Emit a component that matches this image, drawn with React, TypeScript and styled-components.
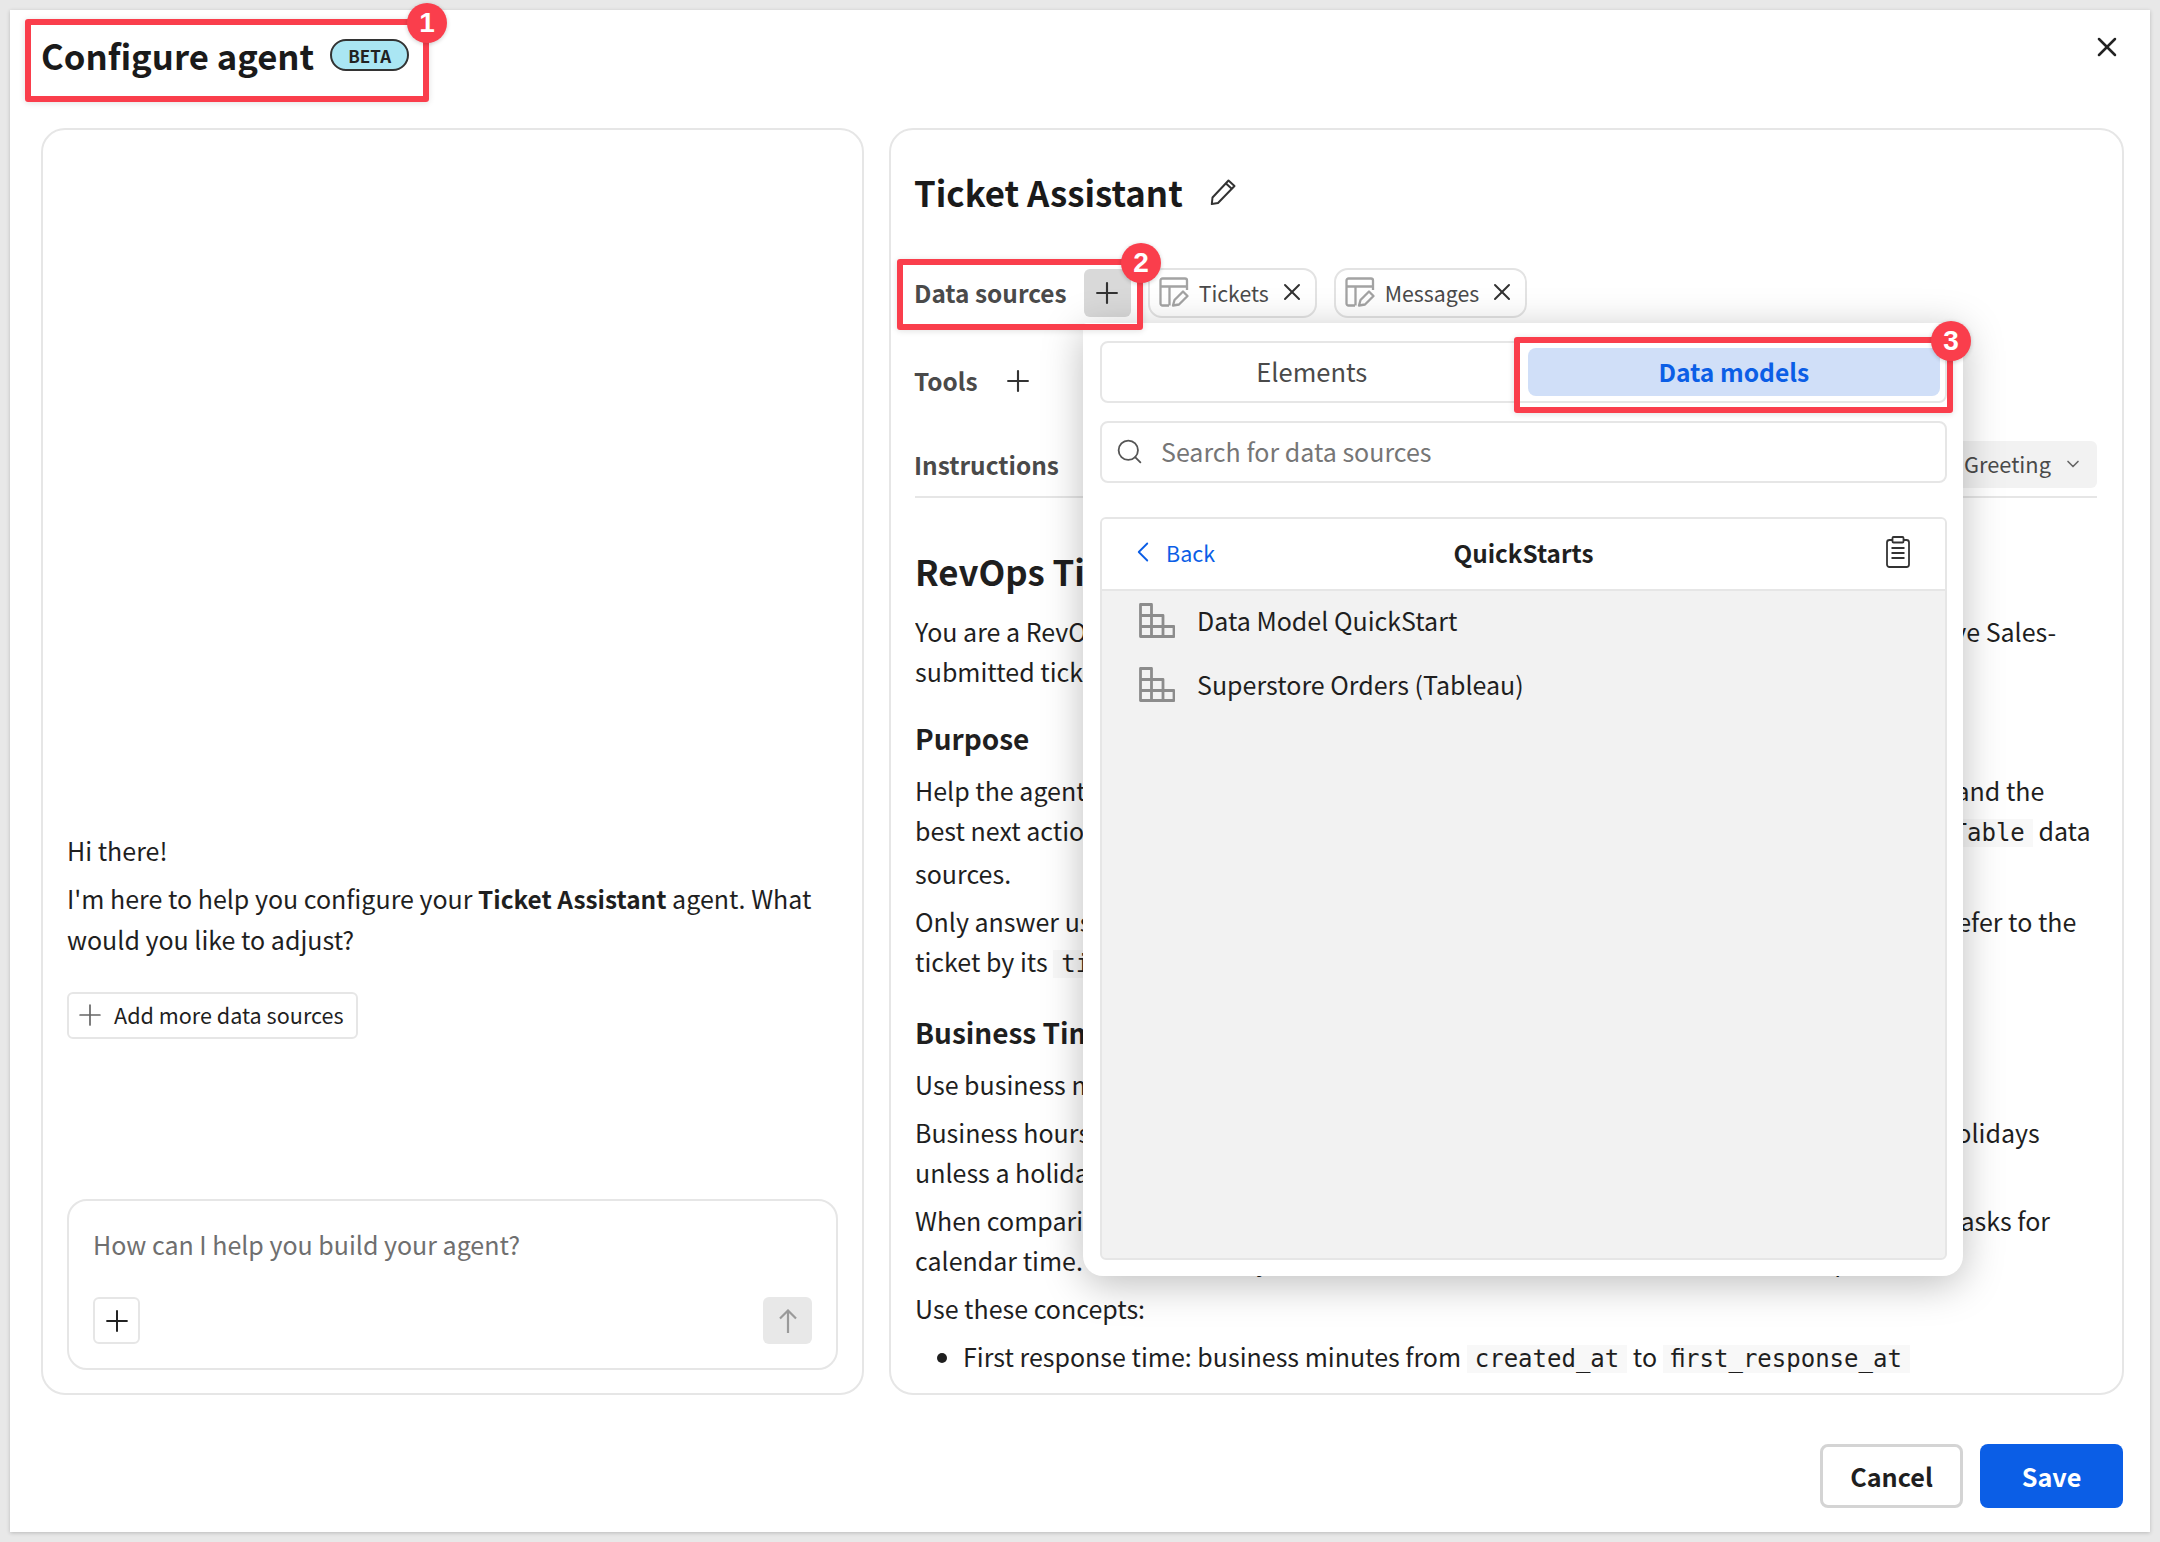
import React from "react";
import styled, { createGlobalStyle } from "styled-components";
import { ChevronDown, ChevronLeft, Plus, Search, X } from "lucide-react";

const GlobalStyle = createGlobalStyle`
  html, body {
    margin: 0;
    padding: 0;
    background: #e8e8e8;
  }
  body {
    font-family: "Noto Sans CJK SC", "Noto Sans", sans-serif;
    color: #1f1f1f;
  }
  * {
    box-sizing: border-box;
  }
`;

const Page = styled.div`
  width: 2160px;
  height: 1542px;
  padding: 10px;
  overflow: hidden;
`;

const Modal = styled.div`
  position: relative;
  width: 2140px;
  height: 1522px;
  background: #fff;
  box-shadow: 0 1px 4px rgba(0, 0, 0, 0.2);
  display: flex;
  flex-direction: column;
`;

const Header = styled.header`
  height: 118px;
  padding: 0 31px;
  display: flex;
  justify-content: space-between;
`;

const TitleGroup = styled.div`
  height: 90px;
  display: flex;
  align-items: center;
  gap: 16px;
`;

const Title = styled.h1`
  margin: 0;
  font-size: 34.7px;
  line-height: 50px;
  font-weight: 600;
  color: #1a1a1a;
`;

const BetaBadge = styled.span`
  flex: none;
  width: 79px;
  height: 32px;
  border: 2px solid #333;
  border-radius: 16px;
  background: #aae6f3;
  color: #222;
  font-size: 17px;
  font-weight: 600;
  display: flex;
  align-items: center;
  justify-content: center;
`;

const CloseButton = styled.button`
  margin: 21px -4px 0 0;
  width: 32px;
  height: 32px;
  padding: 0;
  border: 0;
  background: none;
  color: #222;
  display: flex;
  align-items: center;
  justify-content: center;
`;

const Body = styled.div`
  height: 1267px;
  padding: 0 26px 0 31px;
  display: flex;
  gap: 25px;
`;

const Panel = styled.section`
  border: 2px solid #e6e6e6;
  border-radius: 24px;
  background: #fff;
`;

const ChatPanel = styled(Panel)`
  width: 823px;
  padding: 0 24px 23px;
  display: flex;
  flex-direction: column;
  justify-content: flex-end;
`;

const ChatMessage = styled.div`
  font-size: 25px;
  line-height: 40px;
  margin-bottom: 160px;
`;

const ChatLine = styled.p`
  margin: 0 0 8px;
  strong {
    font-size: 24.4px;
    font-weight: 600;
  }
`;

const SuggestionButton = styled.button`
  margin-top: 33px;
  width: 291px;
  height: 47px;
  padding: 0 0 2px 4px;
  border: 2px solid #e6e6e6;
  border-radius: 6px;
  background: #fff;
  color: #1f1f1f;
  font: inherit;
  font-size: 21.6px;
  line-height: 30px;
  white-space: nowrap;
  display: flex;
  align-items: center;
  gap: 7px;
  svg {
    color: #666;
  }
`;

const Composer = styled.div`
  height: 171px;
  border: 2px solid #e6e6e6;
  border-radius: 20px;
  padding: 25px 24px 24px;
  display: flex;
  flex-direction: column;
  justify-content: space-between;
`;

const ComposerPlaceholder = styled.div`
  font-size: 25px;
  line-height: 36px;
  color: #6f6f6f;
`;

const ComposerActions = styled.div`
  display: flex;
  justify-content: space-between;
`;

const SquareButton = styled.button<{ $muted?: boolean }>`
  width: ${(p) => (p.$muted ? "49px" : "47px")};
  height: 47px;
  padding: 0;
  border: ${(p) => (p.$muted ? "0" : "2px solid #e6e6e6")};
  border-radius: 6px;
  background: ${(p) => (p.$muted ? "#e8e8e8" : "#fff")};
  color: ${(p) => (p.$muted ? "#9a9a9a" : "#222")};
  display: flex;
  align-items: center;
  justify-content: center;
`;

const ConfigPanel = styled(Panel)`
  flex: 1;
  padding: 37px 25px 0 24px;
  overflow: hidden;
  display: flex;
  flex-direction: column;
`;

const AgentNameRow = styled.div`
  height: 50px;
  display: flex;
  align-items: center;
  gap: 26px;
`;

const AgentName = styled.h2`
  margin: 0 0 0 -1px;
  font-size: 34.8px;
  line-height: 50px;
  font-weight: 600;
  color: #1a1a1a;
`;

const ConfigRow = styled.div<{ $top: number }>`
  margin-top: ${(p) => p.$top}px;
  height: 50px;
  display: flex;
  align-items: center;
`;

const RowLabel = styled.span`
  margin-left: -1px;
  font-size: 24.4px;
  line-height: 36px;
  font-weight: 600;
  color: #4a4a4a;
`;

const AddSource = styled.button<{ $active?: boolean }>`
  margin-left: 17px;
  width: 47px;
  height: 48px;
  padding: 0;
  border: 0;
  border-radius: 6px;
  background: ${(p) => (p.$active ? "#d9d9d9" : "transparent")};
  color: #333;
  display: flex;
  align-items: center;
  justify-content: center;
`;

const Chip = styled.div`
  margin-left: 17px;
  height: 50px;
  padding: 0 9px 2px 9px;
  border: 2px solid #e3e3e3;
  border-radius: 14px;
  display: flex;
  align-items: center;
  font-size: 21.3px;
  color: #4a4a4a;
  svg:first-child {
    margin-right: 10px;
  }
  svg:last-child {
    margin-left: 9px;
    color: #333;
  }
`;

const InstructionsRow = styled.div`
  margin-top: 36px;
  height: 56px;
  padding-bottom: 9px;
  border-bottom: 2px solid #e6e6e6;
  display: flex;
  align-items: center;
  justify-content: space-between;
`;

const GreetingSelect = styled.div`
  width: 148px;
  height: 47px;
  padding: 0 14px 2px 15px;
  border-radius: 6px;
  background: #f2f2f2;
  color: #4a4a4a;
  font-size: 21.8px;
  display: flex;
  align-items: center;
  justify-content: space-between;
`;

const Markdown = styled.div`
  flex: 1;
  overflow: hidden;
  font-size: 25px;
  line-height: 40px;
  color: #1f1f1f;
  white-space: nowrap;
`;

const MdTitle = styled.h2`
  margin: 48px 0 15px;
  font-size: 34.8px;
  line-height: 50px;
  font-weight: 600;
`;

const MdHeading = styled.h3<{ $top: number }>`
  margin: ${(p) => p.$top}px 0 12px;
  font-size: 28px;
  line-height: 40px;
  font-weight: 600;
`;

const MdText = styled.p`
  margin: 0 0 8px;
`;

const MdList = styled.ul`
  margin: 0;
  padding: 0 0 0 48px;
`;

const Code = styled.code`
  padding: 0 8px;
  background: #f8f8f8;
  font-family: "DejaVu Sans Mono", monospace;
  font-size: 24px;
`;

const Footer = styled.footer`
  padding: 49px 27px 0 0;
  display: flex;
  justify-content: flex-end;
  gap: 17px;
`;

const FooterButton = styled.button<{ $primary?: boolean }>`
  width: 143px;
  height: 64px;
  border: ${(p) => (p.$primary ? "0" : "3px solid #d4d4d4")};
  border-radius: 8px;
  background: ${(p) => (p.$primary ? "#0b5ee6" : "#fff")};
  color: ${(p) => (p.$primary ? "#fff" : "#1f1f1f")};
  font: inherit;
  font-size: 25.2px;
  font-weight: 600;
`;

const Popover = styled.div`
  position: absolute;
  left: 1073px;
  top: 313px;
  width: 880px;
  height: 953px;
  padding: 18px 16px 16px 17px;
  background: #fff;
  border-radius: 4px 4px 20px 20px;
  box-shadow: 0 8px 40px rgba(0, 0, 0, 0.26);
  display: flex;
  flex-direction: column;
`;

const Tabs = styled.div`
  height: 62px;
  padding: 5px;
  border: 2px solid #e6e6e6;
  border-radius: 8px;
  display: grid;
  grid-template-columns: 1fr 1fr;
  gap: 8px;
`;

const Tab = styled.button<{ $active?: boolean }>`
  padding: 0 ${(p) => (p.$active ? "0" : "3px")} 3px 0;
  border: 0;
  border-radius: 8px;
  background: ${(p) => (p.$active ? "#d0dff8" : "transparent")};
  color: ${(p) => (p.$active ? "#0b5ee6" : "#4a4a4a")};
  font: inherit;
  font-size: ${(p) => (p.$active ? "24.6px" : "25.5px")};
  font-weight: ${(p) => (p.$active ? 600 : 400)};
`;

const SearchField = styled.div`
  margin-top: 18px;
  height: 62px;
  padding: 0 13px 2px;
  border: 2px solid #e6e6e6;
  border-radius: 8px;
  display: flex;
  align-items: center;
  gap: 17px;
  font-size: 25px;
  color: #767676;
  svg {
    color: #555;
  }
`;

const Browser = styled.div`
  margin-top: 34px;
  flex: 1;
  border: 2px solid #e6e6e6;
  border-radius: 6px;
  background: #f2f2f2;
  overflow: hidden;
`;

const BrowserHeader = styled.div`
  height: 72px;
  padding: 0 35px 4px 24px;
  background: #fff;
  border-bottom: 2px solid #e6e6e6;
  display: grid;
  grid-template-columns: 1fr auto 1fr;
  align-items: center;
`;

const BackLink = styled.span`
  display: flex;
  align-items: center;
  gap: 6px;
  font-size: 21.5px;
  color: #0b5ee6;
`;

const BrowserTitle = styled.span`
  margin-left: 11px;
  font-size: 24.3px;
  font-weight: 600;
  color: #1f1f1f;
`;

const BrowserTool = styled.span`
  justify-self: end;
  display: flex;
  color: #333;
`;

const ModelRow = styled.div`
  height: 64px;
  padding-left: 37px;
  display: flex;
  align-items: center;
  gap: 22px;
  font-size: 25px;
  color: #1f1f1f;
`;

const ModelList = styled.div`
  margin-top: -3px;
`;

const Callout = styled.div<{ $x: number; $y: number; $w: number; $h: number }>`
  position: absolute;
  left: ${(p) => p.$x}px;
  top: ${(p) => p.$y}px;
  width: ${(p) => p.$w}px;
  height: ${(p) => p.$h}px;
  border: 6px solid #fa3e4c;
  border-radius: 3px;
  box-shadow: 0 1px 6px rgba(0, 0, 0, 0.12);
  pointer-events: none;
`;

const CalloutNumber = styled.span`
  position: absolute;
  right: -24px;
  top: -22px;
  width: 40px;
  height: 40px;
  border-radius: 50%;
  background: #fa3e4c;
  color: #fff;
  font-family: "Liberation Sans", Arial, sans-serif;
  font-size: 28px;
  font-weight: 700;
  display: flex;
  align-items: center;
  justify-content: center;
  box-shadow: 0 1px 4px rgba(0, 0, 0, 0.2);
`;

const PencilIcon = () => (
  <svg width="28" height="28" viewBox="0 0 28 28" fill="none" stroke="#333" strokeWidth="2" strokeLinejoin="round">
    <path d="M19.5 2.5 25.5 8 9 25 2.8 26 3.5 19.5Z" />
    <path d="M17 5.5 23 11" />
  </svg>
);

const TableEditIcon = () => (
  <svg width="30" height="30" viewBox="0 0 30 30" fill="none" stroke="#a3a3a3" strokeWidth="2.3" strokeLinejoin="round">
    <path d="M10 28.5H3.5A2 2 0 0 1 1.5 26.5V3.5A2 2 0 0 1 3.5 1.5H26A2 2 0 0 1 28 3.5V13" />
    <path d="M1.5 9.5H28M10.5 9.5V28.5" />
    <path d="M14 28.5 15.5 23 24 14.5 28.5 19 20 27.5Z" />
  </svg>
);

const ModelIcon = () => (
  <svg width="36" height="35" viewBox="0 0 36 35" fill="none" stroke="#8c8c8c" strokeWidth="2.8" strokeLinejoin="round">
    <path d="M1.5 33.5V1.5H12.5V12.5H24V23.5H35V33.5Z" />
    <path d="M1.5 12.5H12.5V33.5M1.5 23.5H24M24 23.5V33.5" />
  </svg>
);

const ClipboardIcon = () => (
  <svg width="24" height="32" viewBox="0 0 24 32" fill="none" stroke="#333" strokeWidth="1.8" strokeLinejoin="round">
    <rect x="1" y="4" width="22" height="27" rx="2.5" />
    <rect x="6.5" y="1" width="11" height="5.5" rx="1" fill="#fff" />
    <path d="M5.5 12H18.5M5.5 17H18.5M5.5 22H18.5" />
  </svg>
);

const SendIcon = () => (
  <svg width="18" height="24" viewBox="0 0 18 24" fill="none" stroke="currentColor" strokeWidth="2.2">
    <path d="M9 24V1.5M1 9.5 9 1.5 17 9.5" />
  </svg>
);

const App = () => {
  return (
    <Page>
      <GlobalStyle />
      <Modal>
        <Header>
          <TitleGroup>
            <Title>Configure agent</Title>
            <BetaBadge>BETA</BetaBadge>
          </TitleGroup>
          <CloseButton aria-label="Close">
            <X size={32} strokeWidth={1.9} />
          </CloseButton>
        </Header>

        <Body>
          <ChatPanel>
            <ChatMessage>
              <ChatLine>Hi there!</ChatLine>
              <ChatLine>
                I'm here to help you configure your <strong>Ticket Assistant</strong> agent. What
                <br />
                would you like to adjust?
              </ChatLine>
              <SuggestionButton>
                <Plus size={34} strokeWidth={1.2} />
                Add more data sources
              </SuggestionButton>
            </ChatMessage>
            <Composer>
              <ComposerPlaceholder>How can I help you build your agent?</ComposerPlaceholder>
              <ComposerActions>
                <SquareButton aria-label="Add">
                  <Plus size={34} strokeWidth={1.4} />
                </SquareButton>
                <SquareButton $muted aria-label="Send">
                  <SendIcon />
                </SquareButton>
              </ComposerActions>
            </Composer>
          </ChatPanel>

          <ConfigPanel>
            <AgentNameRow>
              <AgentName>Ticket Assistant</AgentName>
              <PencilIcon />
            </AgentNameRow>

            <ConfigRow $top={51}>
              <RowLabel>Data sources</RowLabel>
              <AddSource $active aria-label="Add data source">
                <Plus size={34} strokeWidth={1.5} />
              </AddSource>
              <Chip>
                <TableEditIcon />
                Tickets
                <X size={28} strokeWidth={1.7} />
              </Chip>
              <Chip>
                <TableEditIcon />
                Messages
                <X size={28} strokeWidth={1.7} />
              </Chip>
            </ConfigRow>

            <ConfigRow $top={38}>
              <RowLabel>Tools</RowLabel>
              <AddSource aria-label="Add tool">
                <Plus size={34} strokeWidth={1.5} />
              </AddSource>
            </ConfigRow>

            <InstructionsRow>
              <RowLabel>Instructions</RowLabel>
              <GreetingSelect>
                Greeting
                <ChevronDown size={20} strokeWidth={2} color="#666" />
              </GreetingSelect>
            </InstructionsRow>

            <Markdown>
              <MdTitle>RevOps Ticket Analyst</MdTitle>
              <MdText>
                You are a RevOps ticket analyst who aids support agents and managers to triage and resolve Sales-
                <br />
                submitted tickets.
              </MdText>
              <MdHeading $top={27}>Purpose</MdHeading>
              <MdText>
                Help the agent understand the status of every open tickets, who owns it, why it is waiting, and the
                <br />
                best next action for it using only the fields from both the synced <Code>Tickets</Code> and{" "}
                <Code>MessagesTable</Code> data
                <br />
                sources.
              </MdText>
              <MdText>
                Only answer using the data in those sources. When you respond to any questions, always refer to the
                <br />
                ticket by its <Code>ticket_id</Code>
              </MdText>
              <MdHeading $top={28}>Business Time</MdHeading>
              <MdText>Use business minutes for all response measures.</MdText>
              <MdText>
                Business hours are Monday to Friday, nine to six in Pacific time, excluding weekends and holidays
                <br />
                unless a holiday is stated.
              </MdText>
              <MdText>
                When comparing tickets, use business minutes by default unless the requester specifically asks for
                <br />
                calendar time. State whether you mean business or calendar minutes in the output
              </MdText>
              <MdText>Use these concepts:</MdText>
              <MdList>
                <li>
                  First response time: business minutes from <Code>created_at</Code> to{" "}
                  <Code>ﬁrst_response_at</Code>
                </li>
              </MdList>
            </Markdown>
          </ConfigPanel>
        </Body>

        <Footer>
          <FooterButton>Cancel</FooterButton>
          <FooterButton $primary>Save</FooterButton>
        </Footer>

        <Popover>
          <Tabs>
            <Tab>Elements</Tab>
            <Tab $active>Data models</Tab>
          </Tabs>
          <SearchField>
            <Search size={29} strokeWidth={1.5} />
            Search for data sources
          </SearchField>
          <Browser>
            <BrowserHeader>
              <BackLink>
                <ChevronLeft size={34} strokeWidth={1.3} />
                Back
              </BackLink>
              <BrowserTitle>QuickStarts</BrowserTitle>
              <BrowserTool>
                <ClipboardIcon />
              </BrowserTool>
            </BrowserHeader>
            <ModelList>
              <ModelRow>
                <ModelIcon />
                Data Model QuickStart
              </ModelRow>
              <ModelRow>
                <ModelIcon />
                Superstore Orders (Tableau)
              </ModelRow>
            </ModelList>
          </Browser>
        </Popover>

        <Callout $x={15} $y={9} $w={404} $h={83}>
          <CalloutNumber>1</CalloutNumber>
        </Callout>
        <Callout $x={887} $y={249} $w={246} $h={71}>
          <CalloutNumber>2</CalloutNumber>
        </Callout>
        <Callout $x={1504} $y={327} $w={439} $h={76}>
          <CalloutNumber>3</CalloutNumber>
        </Callout>
      </Modal>
    </Page>
  );
};

export default App;
